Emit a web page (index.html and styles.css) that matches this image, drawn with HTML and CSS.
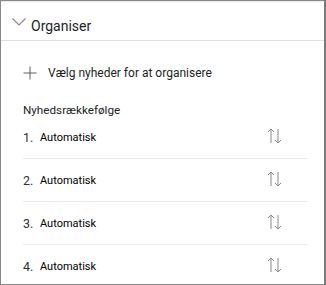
FILE: index.html
```html
<!DOCTYPE html>
<html>
<head>
<meta charset="utf-8">
<link rel="stylesheet" href="styles.css">
</head>
<body>
<div class="panel">
  <div class="header">
    <svg class="chev" width="14" height="8" viewBox="0 0 14 8"><path d="M0.5 0.5 L7 7 L13.5 0.5" fill="none" stroke="#8a8886" stroke-width="1.1"/></svg>
    <span class="title">Organiser</span>
  </div>
  <div class="content">
    <div class="add">
      <svg class="plus" width="14" height="14" viewBox="0 0 14 14"><path d="M7 0.5 V13.5 M0.5 7 H13.5" stroke="#605e5c" stroke-width="1"/></svg>
      <span>Vælg nyheder for at organisere</span>
    </div>
    <div class="label">Nyhedsrækkefølge</div>
    <ul class="list">
      <li class="row"><span class="num">1.</span><span class="name">Automatisk</span><svg class="sort" width="16" height="16" viewBox="0 0 16 16"><path d="M4 1 V15 M1 4 L4 1 L7 4 M11 1 V15 M8 12 L11 15 L14 12" fill="none" stroke="#8a8886" stroke-width="1"/></svg></li>
      <li class="row"><span class="num">2.</span><span class="name">Automatisk</span><svg class="sort" width="16" height="16" viewBox="0 0 16 16"><path d="M4 1 V15 M1 4 L4 1 L7 4 M11 1 V15 M8 12 L11 15 L14 12" fill="none" stroke="#8a8886" stroke-width="1"/></svg></li>
      <li class="row"><span class="num">3.</span><span class="name">Automatisk</span><svg class="sort" width="16" height="16" viewBox="0 0 16 16"><path d="M4 1 V15 M1 4 L4 1 L7 4 M11 1 V15 M8 12 L11 15 L14 12" fill="none" stroke="#8a8886" stroke-width="1"/></svg></li>
      <li class="row"><span class="num">4.</span><span class="name">Automatisk</span><svg class="sort" width="16" height="16" viewBox="0 0 16 16"><path d="M4 1 V15 M1 4 L4 1 L7 4 M11 1 V15 M8 12 L11 15 L14 12" fill="none" stroke="#8a8886" stroke-width="1"/></svg></li>
    </ul>
  </div>
</div>
</body>
</html>
```

FILE: styles.css
```css
html, body {
  margin: 0;
  padding: 0;
  background: #ffffff;
}
body {
  font-family: Roboto, "Liberation Sans", sans-serif;
  color: #323130;
}
.panel {
  width: 326px;
  height: 285px;
  box-sizing: border-box;
  border-top: 1px solid #8a8886;
  border-left: 1px solid #8a8886;
  border-right: 2px solid #7a7a7a;
  border-bottom: 1px solid #8a8886;
  overflow: hidden;
}
.header {
  height: 40px;
  box-sizing: border-box;
  border-top: 1px solid #edebe9;
  border-bottom: 1px solid #e1dfdd;
  display: flex;
  align-items: flex-start;
  padding: 0 0 0 11px;
  gap: 5px;
}
.chev {
  display: block;
  margin-top: 16px;
}
.title {
  font-size: 14px;
  line-height: 16px;
  color: #201f1e;
  margin-top: 16px;
}
.content {
  padding: 0 16px 0 22px;
}
.add {
  display: flex;
  align-items: center;
  gap: 11px;
  height: 20px;
  margin-top: 22px;
  font-size: 12px;
  color: #201f1e;
}
.plus { display: block; }
.label {
  margin-top: 21px;
  font-size: 11.7px;
  color: #201f1e;
  height: 12px;
  line-height: 12px;
}
.list {
  list-style: none;
  margin: 0;
  padding: 0;
}
.row {
  display: flex;
  align-items: center;
  height: 42px;
  border-bottom: 1px solid #edebe9;
  font-size: 11px;
  color: #000;
}
.row:last-child { border-bottom: none; }
.num {
  width: 17px;
  font-size: 12.5px;
  color: #323130;
}
.name { flex: 1; }
.sort {
  display: block;
  margin-right: 25px;
  margin-bottom: 3px;
}
```
